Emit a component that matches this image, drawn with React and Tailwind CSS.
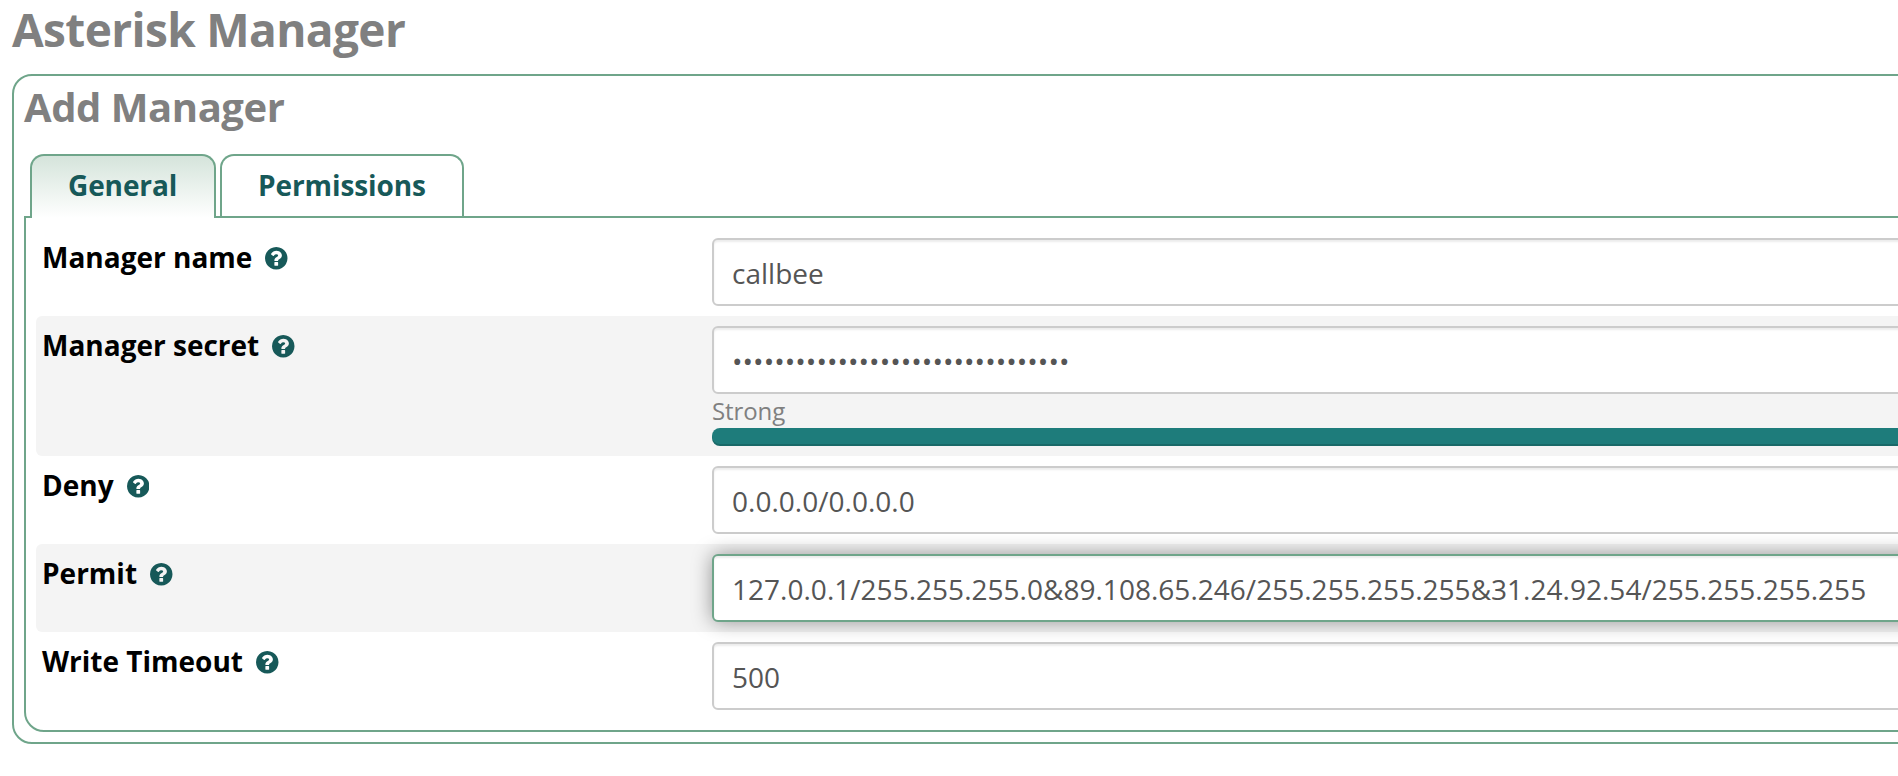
const HELP_PATH =
  'M1024 1376v-192q0-14-9-23t-23-9h-192q-14 0-23 9t-9 23v192q0 14 9 23t23 9h192q14 0 23-9t9-23zm256-672q0-88-55.5-163t-138.5-116-170-41q-243 0-371 213-15 24 8 42l132 100q7 6 19 6 16 0 25-12 53-68 86-92 34-24 86-24 48 0 85.5 26t37.5 59q0 38-20 61t-68 45q-63 28-115.5 86.5t-52.5 125.5v36q0 14 9 23t23 9h192q14 0 23-9t9-23q0-19 21.5-49.5t54.5-49.5q32-18 49-28.5t46-35 44.5-48 28-60.5 12.5-81zm384 192q0 209-103 385.5t-279.5 279.5-385.5 103-385.5-103-279.5-279.5-103-385.5 103-385.5 279.5-279.5 385.5-103 385.5 103 279.5 279.5 103 385.5z';

function HelpIcon() {
  return (
    <svg viewBox="128 128 1536 1536" className="ml-[13px] mt-[3px] size-[22.5px] fill-[#175959]" aria-hidden="true">
      <path d={HELP_PATH} />
    </svg>
  );
}

function Field({ label, value, focused, striped, children }) {
  return (
    <div className={`flex rounded-[6px] py-[10px] pl-[6px] ${striped ? 'bg-[#f4f4f4]' : ''}`}>
      <div className="-mt-[1px] flex h-[40px] w-[670px] shrink-0 items-center text-[28px] leading-[40px] font-bold text-black">
        <span>{label}</span>
        <HelpIcon />
      </div>
      <div className="grow">
        <div
          className={`flex h-[68px] items-center rounded-[6px] border-2 bg-white pt-[2px] pl-[18px] text-[28px] leading-[40px] tracking-[0.02px] whitespace-nowrap text-[#555] ${
            focused
              ? 'relative border-[#6fa58a] shadow-[inset_0_2px_2px_rgba(0,0,0,0.075),0_0_20px_rgba(0,0,0,0.4)]'
              : 'border-[#ccc] shadow-[inset_0_2px_2px_rgba(0,0,0,0.075)]'
          }`}
        >
          {value}
        </div>
        {children}
      </div>
    </div>
  );
}

export default function App() {
  return (
    <div className="h-[776px] w-full overflow-hidden bg-white pl-[12px] font-['Open_Sans',sans-serif]">
      <div className="w-[2100px]">
        <h1 className="h-[74px] pt-[4px] text-[46px] leading-[50px] font-bold tracking-[-0.63px] text-[#808080]">
          Asterisk Manager
        </h1>
        <div className="h-[670px] rounded-[20px] border-2 border-[#6fa58a] px-[10px]">
          <h2 className="h-[78px] pt-[9px] text-[40px] leading-[44px] font-bold tracking-[-0.45px] text-[#808080]">
            Add Manager
          </h2>
          <div className="relative -mb-[2px] flex h-[64px] items-start gap-[4px] pl-[6px] text-[28px] leading-[40px] font-bold tracking-[-0.1px] text-[#175959]">
            <div className="h-[64px] w-[186px] rounded-t-[14px] border-2 border-b-0 border-[#6fa58a] bg-linear-to-b from-[#d5e4db] to-white pt-[9px] pl-[36px]">
              General
            </div>
            <div className="h-[62px] w-[244px] rounded-t-[14px] border-2 border-b-0 border-[#6fa58a] bg-white pt-[9px] pl-[36px]">
              Permissions
            </div>
          </div>
          <div className="rounded-b-[20px] border-2 border-[#6fa58a] p-[10px]">
            <Field label="Manager name" value="callbee" />
            <Field label="Manager secret" value={'•'.repeat(32)} striped>
              <div className="h-[34px] text-[24px] leading-[34px] tracking-[-0.1px] text-[#808080]">Strong</div>
              <div className="h-[18px] rounded-[8px] bg-[#1e7c7b] shadow-[inset_0_-2px_0_rgba(0,0,0,0.15)]" />
            </Field>
            <Field label="Deny" value="0.0.0.0/0.0.0.0" />
            <Field
              label="Permit"
              value="127.0.0.1/255.255.255.0&89.108.65.246/255.255.255.255&31.24.92.54/255.255.255.255"
              striped
              focused
            />
            <Field label="Write Timeout" value="500" />
          </div>
        </div>
      </div>
    </div>
  );
}
